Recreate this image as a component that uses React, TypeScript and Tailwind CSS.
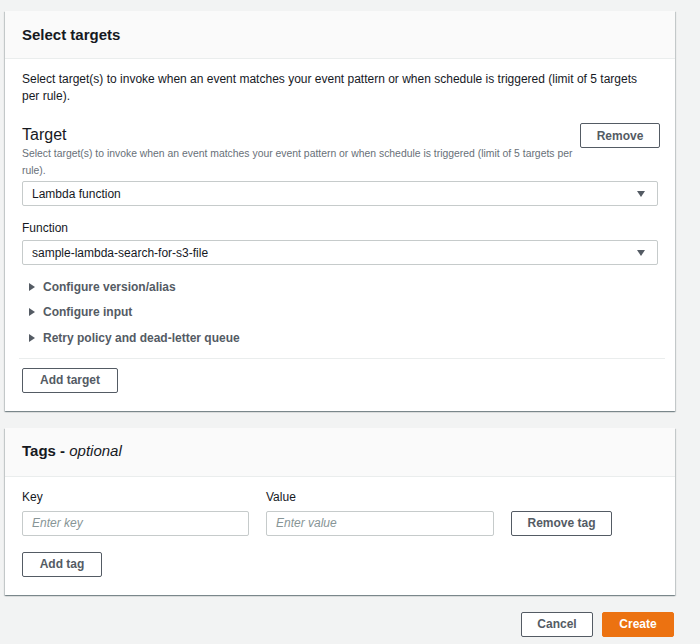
import React from 'react';

const font = { fontFamily: '"Liberation Sans", Arial, sans-serif' };

function Caret() {
  return (
    <svg width="8" height="6" viewBox="0 0 8 6" className="shrink-0">
      <path d="M0 0 H8 L4 6 Z" fill="#545b64" />
    </svg>
  );
}

function Tri() {
  return (
    <svg width="6" height="8" viewBox="0 0 6 8" className="shrink-0">
      <path d="M0 0 L6 4 L0 8 Z" fill="#545b64" />
    </svg>
  );
}

function Select({ value }: { value: string }) {
  return (
    <div className="flex h-[25px] items-center justify-between rounded-[2px] border border-[#c6cbcb] bg-white pl-[9px] pr-[12px] text-[12px] text-[#16191f]">
      <span>{value}</span>
      <Caret />
    </div>
  );
}

function Button({ children, className = '' }: { children: React.ReactNode; className?: string }) {
  return (
    <button className={`flex h-[25px] shrink-0 items-center justify-center rounded-[2px] border border-[#545b64] bg-white text-[12px] font-bold text-[#545b64] ${className}`}>
      {children}
    </button>
  );
}

export default function App() {
  const expanders = ['Configure version/alias', 'Configure input', 'Retry policy and dead-letter queue'];

  return (
    <div className="min-h-[644px] w-[700px] bg-[#f2f3f3] pl-[5px] pt-[11px]" style={font}>
      {/* Select targets card */}
      <div className="w-[670px] bg-white shadow-[0_1px_1px_0_rgba(0,28,36,0.3),1px_1px_1px_0_rgba(0,28,36,0.15),-1px_1px_1px_0_rgba(0,28,36,0.15)]">
        <div className="flex h-[48px] items-center border-b border-[#eaeded] bg-[#fafafa] px-[17px]">
          <h2 className="pt-[1px] text-[15px] font-bold text-[#16191f]">Select targets</h2>
        </div>
        <div className="px-[17px] pt-[12px] pb-[18px]">
          <p className="w-[628px] text-[12px] leading-[17px] text-[#16191f]">
            Select target(s) to invoke when an event matches your event pattern or when schedule is triggered (limit of 5 targets per rule).
          </p>

          <div className="mt-[18px] flex items-start justify-between">
            <div className="pt-[3px]">
              <div className="text-[16px] leading-[18px] text-[#16191f]">Target</div>
              <p className="mt-[1px] w-[556px] text-[10.4px] leading-[17px] text-[#687078]">
                Select target(s) to invoke when an event matches your event pattern or when schedule is triggered (limit of 5 targets per rule).
              </p>
            </div>
            <Button className="-mr-[2px] w-[80px]">Remove</Button>
          </div>

          <div className="mt-[2px]">
            <Select value="Lambda function" />
          </div>

          <div className="mt-[14px] text-[12px] leading-[17px] text-[#16191f]">Function</div>
          <div className="mt-[3px]">
            <Select value="sample-lambda-search-for-s3-file" />
          </div>

          <div className="mt-[13px] flex flex-col gap-[8px]">
            {expanders.map((label) => (
              <div key={label} className="flex h-[17.5px] items-center gap-[8px] pl-[7px] text-[12px] font-bold text-[#545b64]">
                <Tri />
                <span>{label}</span>
              </div>
            ))}
          </div>

          <div className="mt-[11px] -ml-[3px] -mr-[7px] border-t border-[#eaeded]" />

          <Button className="mt-[9px] w-[96px]">Add target</Button>
        </div>
      </div>

      {/* Tags card */}
      <div className="mt-[17px] w-[670px] bg-white shadow-[0_1px_1px_0_rgba(0,28,36,0.3),1px_1px_1px_0_rgba(0,28,36,0.15),-1px_1px_1px_0_rgba(0,28,36,0.15)]">
        <div className="flex h-[49px] items-center border-b border-[#eaeded] bg-[#fafafa] px-[17px]">
          <h2 className="text-[15px] font-bold text-[#16191f]">
            Tags - <span className="font-normal italic">optional</span>
          </h2>
        </div>
        <div className="px-[17px] pt-[12px] pb-[18px]">
          <div className="flex items-end gap-[17px]">
            <div className="w-[227px]">
              <div className="mb-[5px] text-[12px] leading-[17px] text-[#16191f]">Key</div>
              <div className="flex h-[25px] items-center rounded-[2px] border border-[#c6cbcb] px-[9px] text-[12px] italic text-[#879596]">Enter key</div>
            </div>
            <div className="w-[228px]">
              <div className="mb-[5px] text-[12px] leading-[17px] text-[#16191f]">Value</div>
              <div className="flex h-[25px] items-center rounded-[2px] border border-[#c6cbcb] px-[9px] text-[12px] italic text-[#879596]">Enter value</div>
            </div>
            <Button className="w-[101px]">Remove tag</Button>
          </div>
          <Button className="mt-[16px] w-[80px]">Add tag</Button>
        </div>
      </div>

      {/* Footer actions */}
      <div className="mt-[17px] flex w-[670px] justify-end gap-[9px] pr-[1px]">
        <Button className="w-[72px]">Cancel</Button>
        <button className="flex h-[25px] w-[72px] items-center justify-center rounded-[2px] border border-[#ec7211] bg-[#ec7211] text-[12px] font-bold text-white">
          Create
        </button>
      </div>
    </div>
  );
}
